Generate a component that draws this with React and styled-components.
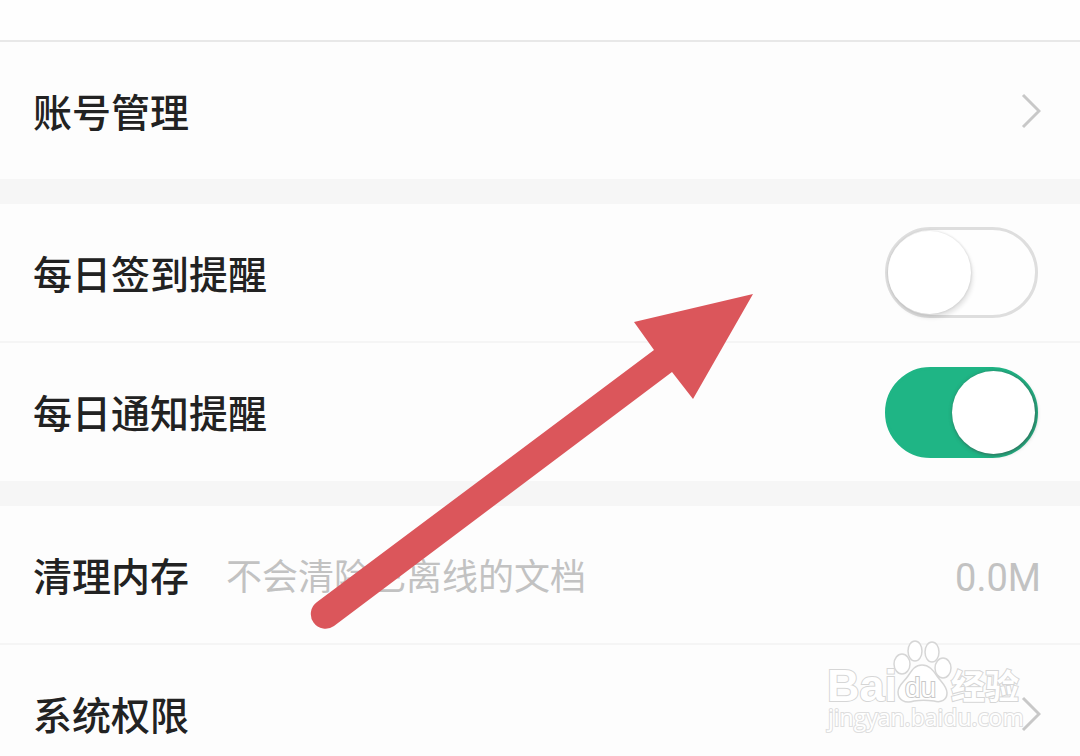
import { useState } from 'react';
import styled, { createGlobalStyle } from 'styled-components';

export default function App() {
  const [checkin, setCheckin] = useState(false);
  const [notify, setNotify] = useState(true);

  return (
    <>
      <GlobalStyle />
      <Screen>
        <Header />
        <Group>
          <LinkRow href='#account'>
            <Title>账号管理</Title>
            <Chevron />
          </LinkRow>
        </Group>
        <Group>
          <SwitchRow>
            <Title>每日签到提醒</Title>
            <Switch
              checked={checkin}
              onChange={e => setCheckin(e.target.checked)}
            />
          </SwitchRow>
          <SwitchRow>
            <Title>每日通知提醒</Title>
            <Switch
              checked={notify}
              onChange={e => setNotify(e.target.checked)}
            />
          </SwitchRow>
        </Group>
        <Group>
          <ActionRow type='button'>
            <Title>清理内存</Title>
            <Hint>不会清除已离线的文档</Hint>
            <Value>0.0M</Value>
          </ActionRow>
          <LinkRow href='#permissions'>
            <Title>系统权限</Title>
            <Chevron />
          </LinkRow>
        </Group>
        <Arrow viewBox='0 0 444 338' aria-hidden='true'>
          <path d='M443 1 L324 29 L344 57 L7 309 A14 14 0 0 0 24 333 L362 79 L383 106 Z' />
        </Arrow>
        <Watermark />
      </Screen>
    </>
  );
}

function Chevron() {
  return (
    <ChevronIcon viewBox='0 0 20 36' aria-hidden='true'>
      <path d='M2 2 L18 18 L2 34' />
    </ChevronIcon>
  );
}

function Watermark() {
  return (
    <Mark viewBox='0 0 200 98' role='img' aria-label='Baidu 经验'>
      <BrandText x='1' y='61' $size={45}>
        Bai
      </BrandText>
      <ellipse cx='76' cy='24' rx='8' ry='10' />
      <ellipse cx='89' cy='11' rx='7' ry='10' />
      <ellipse cx='106' cy='12' rx='7' ry='10' />
      <ellipse cx='117' cy='28' rx='8' ry='10' />
      <path d='M96 25 C103 25 107 30 111 36 C115 42 121 46 121 53 C121 60 115 63 108 61 C101 60 94 60 88 61 C79 64 72 60 72 52 C72 45 78 42 82 36 C86 30 89 25 96 25 Z' />
      <BrandText x='79' y='57' $size={28} $thin>
        du
      </BrandText>
      <BrandText x='125' y='59' $size={34}>
        经验
      </BrandText>
      <UrlText x='2' y='86'>
        jingyan.baidu.com
      </UrlText>
    </Mark>
  );
}

const GlobalStyle = createGlobalStyle`
  * {
    box-sizing: border-box;
  }

  body {
    margin: 0;
    background-color: #fdfdfd;
    font-family: Roboto, 'Noto Sans CJK SC', sans-serif;
  }
`;

const Screen = styled.main`
  position: relative;
  height: 100vh;
  overflow: hidden;
`;

const Header = styled.header`
  height: 42px;
  background-color: #fefefe;
  border-bottom: 2px solid #e8e8e8;
`;

const Group = styled.section`
  & + & {
    border-top: 25px solid #f6f6f6;
  }
`;

const Row = styled.div`
  display: flex;
  align-items: center;
  width: 100%;
  height: 137px;
  padding: 0 39px 0 33px;
  color: #222;
  background-color: #fdfdfd;

  & + & {
    height: 140px;
    border-top: 2px solid #f5f5f5;
  }
`;

const LinkRow = styled(Row).attrs({ as: 'a' })`
  text-decoration: none;
`;

const SwitchRow = styled(Row).attrs({ as: 'label' })`
  padding-right: 42px;
  cursor: pointer;
`;

const ActionRow = styled(Row).attrs({ as: 'button' })`
  border: 0;
  font: inherit;
  text-align: left;
  cursor: pointer;
`;

const Title = styled.span`
  padding-top: 6px;
  font-size: 39px;
  line-height: 56px;
  font-weight: 500;
`;

const Hint = styled.span`
  margin-left: 37px;
  padding-top: 6px;
  color: #c2c2c2;
  font-size: 36px;
  line-height: 56px;
`;

const Value = styled.span`
  margin-left: auto;
  padding-top: 6px;
  color: #c2c2c2;
  font-size: 38px;
  line-height: 56px;
`;

const ChevronIcon = styled.svg`
  width: 20px;
  height: 36px;
  margin-left: auto;
  fill: none;
  stroke: #c8c8c8;
  stroke-width: 3;
`;

const Switch = styled.input.attrs({ type: 'checkbox' })`
  appearance: none;
  display: flex;
  align-items: center;
  width: 153px;
  height: 91px;
  margin: 0 0 0 auto;
  border: 3px solid #dedede;
  border-radius: 46px;
  background-color: #fefefe;
  cursor: pointer;

  &::before {
    content: '';
    width: 83px;
    height: 83px;
    border-radius: 50%;
    background-color: #fff;
    box-shadow: 0 0 2px 1px rgba(0, 0, 0, 0.08), 2px 4px 4px rgba(0, 0, 0, 0.1);
  }

  &:checked {
    justify-content: flex-end;
    border-color: #1fb585;
    background-color: #1fb585;
  }

  &:checked::before {
    box-shadow: 1px 1px 4px rgba(60, 60, 60, 0.7);
  }
`;

const Arrow = styled.svg`
  position: absolute;
  top: 293px;
  left: 310px;
  width: 444px;
  height: 338px;
  fill: #db565b;
  pointer-events: none;
`;

const Mark = styled.svg`
  position: absolute;
  top: 640px;
  right: 54px;
  width: 200px;
  height: 98px;
  fill: #fff;
  stroke: #d6d6d6;
  stroke-width: 1.5;
  overflow: visible;
  pointer-events: none;
`;

const BrandText = styled.text`
  font-family: 'Liberation Sans', 'Noto Sans CJK SC', sans-serif;
  font-size: ${({ $size }) => $size}px;
  font-weight: ${({ $thin }) => ($thin ? 400 : 700)};
  stroke: ${({ $thin }) => ($thin ? '#c8c8c8' : '#d6d6d6')};
  stroke-width: 2;
  paint-order: stroke;
`;

const UrlText = styled.text`
  font-family: 'Open Sans', sans-serif;
  font-size: 23px;
  stroke: #dedede;
  stroke-width: 2;
  paint-order: stroke;
`;
